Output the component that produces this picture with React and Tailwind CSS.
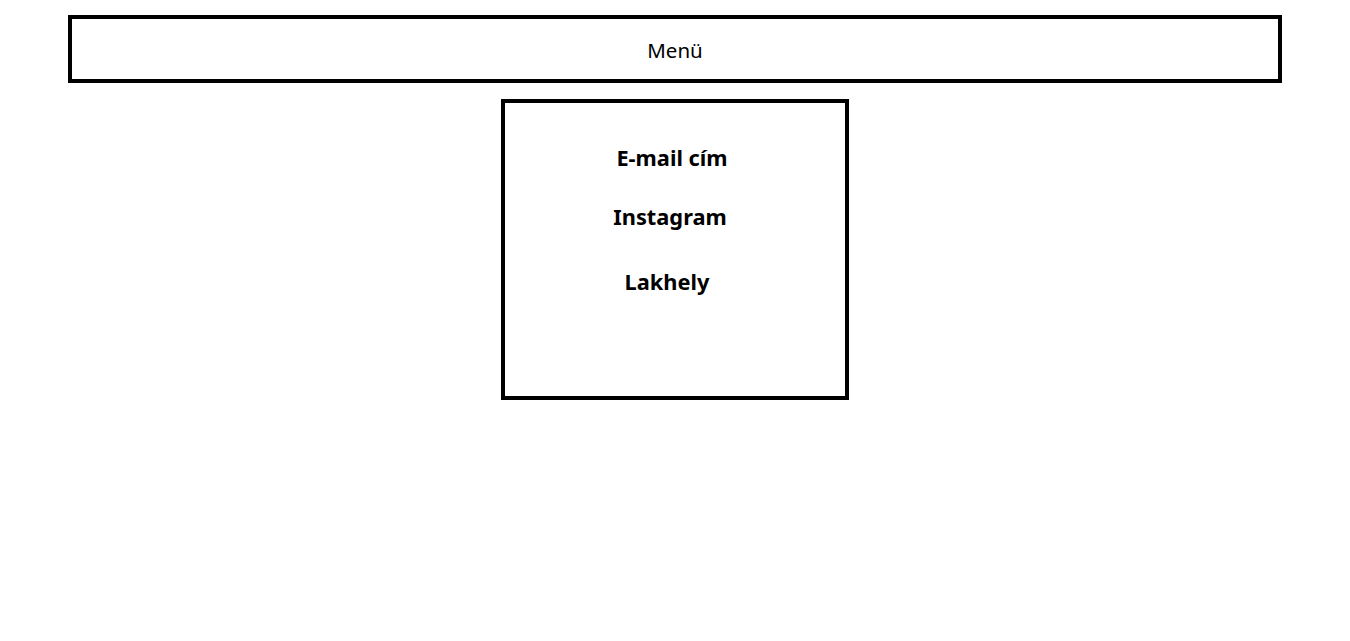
export default function App() {
  const items = [
    { label: 'E-mail cím', cls: 'mt-[41px] pr-[6px]' },
    { label: 'Instagram', cls: 'mt-[31px] pr-[10px]' },
    { label: 'Lakhely', cls: 'mt-[37px] pr-[16px]' },
  ];

  return (
    <div className="min-h-screen bg-white text-black font-['Noto_Sans','Open_Sans',sans-serif]">
      <div className="pt-[15px]">
        <nav className="mx-auto w-[1214px] h-[68px] border-4 border-black pt-[17px]">
          <p className="text-center text-[20.5px] leading-[28px]">Menü</p>
        </nav>

        <div className="mx-auto mt-[16px] w-[348px] h-[301px] border-4 border-black">
          {items.map(item => (
            <h3
              key={item.label}
              className={`text-center font-bold text-[21.8px] leading-[28px] ${item.cls}`}
            >
              {item.label}
            </h3>
          ))}
        </div>
      </div>
    </div>
  );
}
